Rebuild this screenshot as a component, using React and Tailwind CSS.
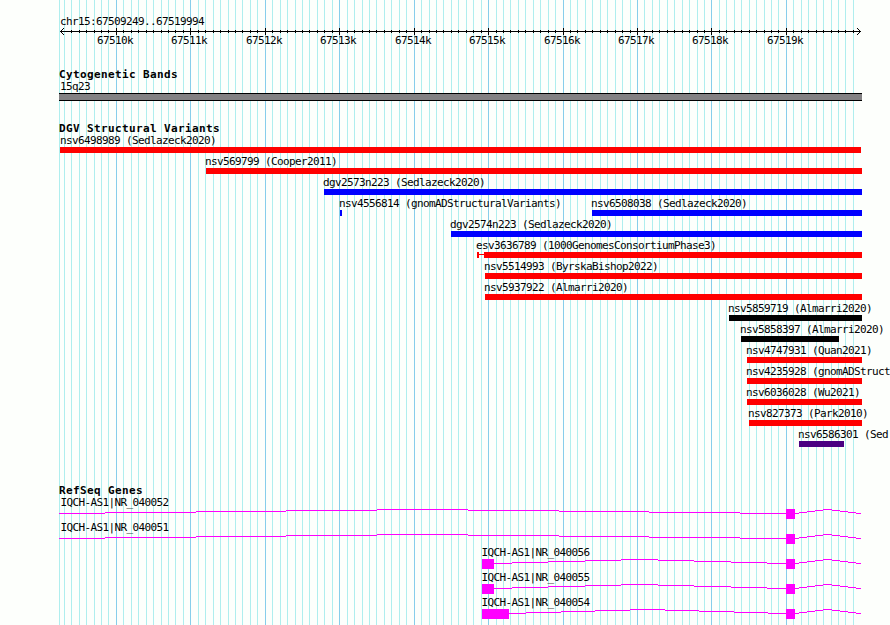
import React from 'react';

const ORIGIN = 116.4;
const PX_PER_KB = 74.44;

const labelFont = "font-['DejaVu_Sans_Mono',monospace] text-[11px] leading-[13px] tracking-[-0.622px] whitespace-pre text-black";
const headingFont = "font-['DejaVu_Sans_Mono',monospace] font-bold text-[11px] leading-[13px] tracking-[0.378px] whitespace-pre text-black";

// ten minor steps per kilobase, snapped to whole pixels
const ticks = [];
for (let i = -7; i < 100; i++) {
  ticks.push({ x: Math.floor(ORIGIN + (i * PX_PER_KB) / 10), major: i % 10 === 0 });
}

const kilobases = ['67510k', '67511k', '67512k', '67513k', '67514k', '67515k', '67516k', '67517k', '67518k', '67519k'];

// each row: list of features placed left to right
const variantRows = [
  [{ name: 'nsv6498989 (Sedlazeck2020)', start: 60, end: 861, color: 'bg-[#ff0000]' }],
  [{ name: 'nsv569799 (Cooper2011)', start: 206, end: 862, color: 'bg-[#ff0000]' }],
  [{ name: 'dgv2573n223 (Sedlazeck2020)', start: 324, end: 862, color: 'bg-[#0000ff]' }],
  [
    { name: 'nsv4556814 (gnomADStructuralVariants)', start: 340, end: 342, color: 'bg-[#0000ff]' },
    { name: 'nsv6508038 (Sedlazeck2020)', start: 592, end: 862, color: 'bg-[#0000ff]' },
  ],
  [{ name: 'dgv2574n223 (Sedlazeck2020)', start: 451, end: 862, color: 'bg-[#0000ff]' }],
  [{ name: 'esv3636789 (1000GenomesConsortiumPhase3)', start: 477, end: 862, lead: 7, color: 'bg-[#ff0000]' }],
  [{ name: 'nsv5514993 (ByrskaBishop2022)', start: 485, end: 862, color: 'bg-[#ff0000]' }],
  [{ name: 'nsv5937922 (Almarri2020)', start: 485, end: 862, color: 'bg-[#ff0000]' }],
  [{ name: 'nsv5859719 (Almarri2020)', start: 729, end: 862, color: 'bg-black' }],
  [{ name: 'nsv5858397 (Almarri2020)', start: 741, end: 839, color: 'bg-black' }],
  [{ name: 'nsv4747931 (Quan2021)', start: 747, end: 862, color: 'bg-[#ff0000]' }],
  [{ name: 'nsv4235928 (gnomADStruct', start: 747, end: 862, color: 'bg-[#ff0000]' }],
  [{ name: 'nsv6036028 (Wu2021)', start: 747, end: 862, color: 'bg-[#ff0000]' }],
  [{ name: 'nsv827373 (Park2010)', start: 749, end: 862, color: 'bg-[#ff0000]' }],
  [{ name: 'nsv6586301 (Sed', start: 799, end: 844, color: 'bg-[#4b0082]' }],
];

// intron segments are [x, height above baseline], each running to the next x
const longIntron = [[59, 0], [105, 1], [196, 2], [286, 3], [377, 4], [468, 3], [559, 2], [649, 1], [740, 0], [786, 0]];
const midIntron = [[494, 0], [512, 1], [548, 2], [585, 3], [621, 4], [658, 3], [694, 2], [731, 1], [767, 0], [786, 0]];
const shortIntron = [[509, 0], [526, 1], [561, 2], [595, 3], [630, 4], [665, 3], [699, 2], [734, 1], [768, 0], [786, 0]];
const tailIntron = [[795, 0], [799, 1], [807, 2], [815, 3], [823, 4], [832, 3], [840, 2], [848, 1], [856, 0], [861, 0]];

const genes = [
  { name: 'IQCH-AS1|NR_040052', label: 60.5, intron: longIntron },
  { name: 'IQCH-AS1|NR_040051', label: 60.5, intron: longIntron },
  { name: 'IQCH-AS1|NR_040056', label: 481.5, exonEnd: 494, intron: midIntron },
  { name: 'IQCH-AS1|NR_040055', label: 481.5, exonEnd: 494, intron: midIntron },
  { name: 'IQCH-AS1|NR_040054', label: 481.5, exonEnd: 509, intron: shortIntron },
];

const Grid = () => (
  <svg className="absolute inset-0" width="890" height="625" shapeRendering="crispEdges">
    <rect x="59" y="0" width="1" height="625" fill="#afeeee" />
    {ticks.map((t) => (
      <rect key={t.x} x={t.x} y="0" width="1" height="625" fill={t.major ? '#87ceeb' : '#afeeee'} />
    ))}
  </svg>
);

const Ruler = () => (
  <div>
    <div className={`${labelFont} ml-[60px]`}>chr15:67509249..67519994</div>
    <svg className="block" width="890" height="7" shapeRendering="crispEdges">
      <rect x="60" y="3" width="801" height="1" />
      {ticks.slice(1).map((t) => (
        <rect key={t.x} x={t.x} y={t.major ? 0 : 2} width="1" height={t.major ? 7 : 3} />
      ))}
      <path d="M61 2h1v1h-1zM62 1h1v1h-1zM63 0h1v1h-1zM61 4h1v1h-1zM62 5h1v1h-1zM63 6h1v1h-1z" />
      <path d="M859 2h1v1h-1zM858 1h1v1h-1zM857 0h1v1h-1zM859 4h1v1h-1zM858 5h1v1h-1zM857 6h1v1h-1z" />
    </svg>
    <div className="relative h-[13px]">
      {kilobases.map((kb, i) => (
        <span
          key={kb}
          className={`${labelFont} absolute -top-px`}
          style={{ left: Math.floor(ORIGIN + i * PX_PER_KB) - 19 }}
        >
          {kb}
        </span>
      ))}
    </div>
  </div>
);

const Feature = ({ feature, offset }) => {
  const { name, start, end, lead, color } = feature;
  return (
    <div className="shrink-0" style={{ marginLeft: start - offset, width: end - start }}>
      <div className={`${labelFont} w-0 ${start > 60 ? '-ml-px' : ''}`}>{name}</div>
      <div className="flex h-[6px]">
        {lead && (
          <div className="flex h-full" style={{ width: lead }}>
            <div className={`h-full w-[2px] ${color}`} />
            <div className={`mt-[2px] h-px flex-1 ${color}`} />
          </div>
        )}
        <div className={`h-full flex-1 ${color}`} />
      </div>
    </div>
  );
};

const Intron = ({ points }) =>
  points.slice(0, -1).map(([x, rise], i) => (
    <rect key={x} x={x} y={4 - rise} width={points[i + 1][0] - x} height="1" />
  ));

const Gene = ({ gene }) => (
  <div className="h-[25px]">
    <div className={labelFont} style={{ marginLeft: gene.label }}>{gene.name}</div>
    <svg className="block" width="890" height="12" fill="#ff00ff" shapeRendering="crispEdges">
      {gene.exonEnd && <rect x="482" y="0" width={gene.exonEnd - 482} height="10" />}
      <Intron points={gene.intron} />
      <rect x="786" y="0" width="9" height="10" />
      <Intron points={tailIntron} />
    </svg>
  </div>
);

const App = () => (
  <div className="relative h-[625px] w-[890px] overflow-hidden bg-[#fdfffc]">
    <Grid />
    <div className="relative pt-[15px]">
      <Ruler />

      {/* Cytogenetic bands */}
      <div className="mt-[20px]">
        <div className={`${headingFont} ml-[59px]`}>Cytogenetic Bands</div>
        <div className={`${labelFont} -mt-px ml-[60px]`}>15q23</div>
        <div className="ml-[59px] h-[8px] w-[803px] border-y border-black bg-[#838183]" />
      </div>

      {/* Structural variants */}
      <div className="mt-[21px]">
        <div className={`${headingFont} ml-[59px]`}>DGV Structural Variants</div>
        <div className="-mt-px">
          {variantRows.map((row) => (
            <div key={row[0].name} className="flex h-[21px]">
              {row.map((feature, i) => (
                <Feature key={feature.name} feature={feature} offset={i ? row[i - 1].end : 0} />
              ))}
            </div>
          ))}
        </div>
      </div>

      {/* Genes */}
      <div className="mt-[35px]">
        <div className={`${headingFont} ml-[59px]`}>RefSeq Genes</div>
        <div className="-mt-px">
          {genes.map((gene) => (
            <Gene key={gene.name} gene={gene} />
          ))}
        </div>
      </div>
    </div>
  </div>
);

export default App;
